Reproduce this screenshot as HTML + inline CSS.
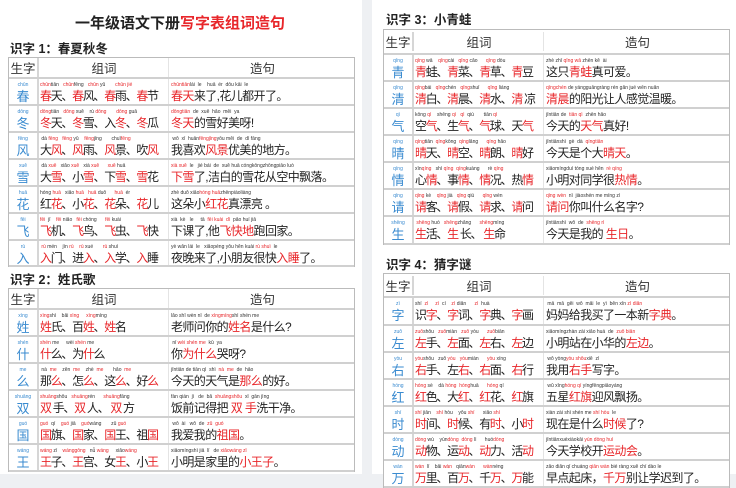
<!DOCTYPE html>
<html><head><meta charset="utf-8">
<style>
*{margin:0;padding:0;box-sizing:border-box}
body{width:736px;height:474px;overflow:hidden;background:#eef0f3;font-family:"Liberation Sans","Noto Sans CJK SC",sans-serif;color:#222;position:relative}
.page{position:absolute;top:0;background:#fff;height:474px}
.h1{position:absolute;font-size:15px;font-weight:bold;white-space:nowrap}
.h2{position:absolute;font-size:12.5px;font-weight:bold;white-space:nowrap}
.r{color:#e8262a}
.tbl{position:absolute;border:1px solid #bbb;border-bottom:none;background:#fff}
.row{display:flex;border-bottom:2px solid #d0d0d0}
.hd{font-size:12.5px;color:#333;align-items:center}
.c1{width:30px;flex:0 0 30px;border-right:2px solid #d6d6d6;text-align:center;overflow:hidden}
.c2{width:130px;flex:0 0 130px;border-right:1px solid #e4e4e4;padding-left:1px;overflow:hidden}
.c3{flex:1 1 auto;padding-left:2px;overflow:hidden}
.hd .c2,.hd .c3{text-align:center}
.py{font-size:5px;line-height:7px;height:7px;white-space:pre;color:#333;padding-top:3px;box-sizing:content-box}
.c1 .py{color:#3a8bd0}
.py .r{color:#e8262a}
.ch{font-size:13px;line-height:15px;color:#3a8bd0}
.tx{font-size:12px;line-height:15px;white-space:nowrap;letter-spacing:-0.6px}
.c2 .tx{letter-spacing:-1.3px}
</style></head><body>

<div class="page" style="left:0;width:362px"></div>
<div class="page" style="left:372px;width:364px"></div>

<div class="h1" style="left:75px;top:12px">一年级语文下册<span class="r">写字表组词造句</span></div>
<div class="h2" style="left:10px;top:38px">识字 1：春夏秋冬</div>

<div class="tbl" style="left:8px;top:57px;width:347px">
<div class="row hd" style="height:21px"><div class="c1">生字</div><div class="c2">组词</div><div class="c3">造句</div></div>
<div class="row" style="height:27px"><div class="c1"><div class="py">chūn</div><div class="ch">春</div></div><div class="c2"><div class="py"><span class="r">chūn</span>tiān   <span class="r">chūn</span>fēng   <span class="r">chūn</span> yǔ       <span class="r">chūn jié</span></div><div class="tx"><span class="r">春</span>天、<span class="r">春</span>风、<span class="r">春</span>雨、<span class="r">春</span>节</div></div><div class="c3"><div class="py"><span class="r">chūntiān</span>lái  le    huā  ér  dōu kāi  le</div><div class="tx"><span class="r">春天</span>来了,花儿都开了。</div></div></div>
<div class="row" style="height:27px"><div class="c1"><div class="py">dōng</div><div class="ch">冬</div></div><div class="c2"><div class="py"><span class="r">dōng</span>tiān   <span class="r">dōng</span> xuě    rù <span class="r">dōng</span>       <span class="r">dōng</span> guā</div><div class="tx"><span class="r">冬</span>天、<span class="r">冬</span>雪、入<span class="r">冬</span>、<span class="r">冬</span>瓜</div></div><div class="c3"><div class="py"><span class="r">dōngtiān</span>  de  xuě  hǎo  měi  ya</div><div class="tx"><span class="r">冬天</span>的雪好美呀!</div></div></div>
<div class="row" style="height:27px"><div class="c1"><div class="py">fēng</div><div class="ch">风</div></div><div class="c2"><div class="py"> dà <span class="r">fēng</span>   <span class="r">fēng</span> yǔ    <span class="r">fēng</span>jǐng       chuī<span class="r">fēng</span></div><div class="tx">大<span class="r">风</span>、<span class="r">风</span>雨、<span class="r">风</span>景、吹<span class="r">风</span></div></div><div class="c3"><div class="py"> wǒ  xǐ  huān<span class="r">fēngjǐng</span>yōu měi  de  dì fāng</div><div class="tx">我喜欢<span class="r">风景</span>优美的地方。</div></div></div>
<div class="row" style="height:27px"><div class="c1"><div class="py">xuě</div><div class="ch">雪</div></div><div class="c2"><div class="py"> dà <span class="r">xuě</span>   xiǎo <span class="r">xuě</span>   xià <span class="r">xuě</span>      <span class="r">xuě</span> huā</div><div class="tx">大<span class="r">雪</span>、小<span class="r">雪</span>、下<span class="r">雪</span>、<span class="r">雪</span>花</div></div><div class="c3"><div class="py"><span class="r">xià xuě</span>  le   jié bái  de  xuě huā cóngkōngzhōngpiāo luò</div><div class="tx"><span class="r">下雪</span>了,洁白的雪花从空中飘落。</div></div></div>
<div class="row" style="height:27px"><div class="c1"><div class="py">huā</div><div class="ch">花</div></div><div class="c2"><div class="py">hóng <span class="r">huā</span>   xiǎo <span class="r">huā</span>   <span class="r">huā</span> duǒ      <span class="r">huā</span>  ér</div><div class="tx">红<span class="r">花</span>、小<span class="r">花</span>、<span class="r">花</span>朵、<span class="r">花</span>儿</div></div><div class="c3"><div class="py">zhè duǒ xiǎo<span class="r">hóng huā</span>zhēnpiàoliàng</div><div class="tx">这朵小<span class="r">红花</span>真漂亮 。</div></div></div>
<div class="row" style="height:27px"><div class="c1"><div class="py">fēi</div><div class="ch">飞</div></div><div class="c2"><div class="py"><span class="r">fēi</span>  jī    <span class="r">fēi</span> niǎo   <span class="r">fēi</span> chóng      <span class="r">fēi</span> kuài</div><div class="tx"><span class="r">飞</span>机、<span class="r">飞</span>鸟、<span class="r">飞</span>虫、<span class="r">飞</span>快</div></div><div class="c3"><div class="py">xià  kè   le     tā  <span class="r">fēi kuài  dì</span>  pǎo huí jiā</div><div class="tx">下课了,他<span class="r">飞快地</span>跑回家。</div></div></div>
<div class="row" style="height:26px"><div class="c1"><div class="py">rù</div><div class="ch">入</div></div><div class="c2"><div class="py"> <span class="r">rù</span> mén    jìn <span class="r">rù</span>    <span class="r">rù</span> xué       <span class="r">rù</span> shuì</div><div class="tx"><span class="r">入</span>门、进<span class="r">入</span>、<span class="r">入</span>学、<span class="r">入</span>睡</div></div><div class="c3"><div class="py">yè wǎn lái  le   xiǎopéng yǒu hěn kuài <span class="r">rù shuì</span>  le</div><div class="tx">夜晚来了,小朋友很快<span class="r">入睡</span>了。</div></div></div>
</div>

<div class="h2" style="left:10px;top:269px">识字 2：姓氏歌</div>
<div class="tbl" style="left:8px;top:288px;width:347px">
<div class="row hd" style="height:21px"><div class="c1">生字</div><div class="c2">组词</div><div class="c3">造句</div></div>
<div class="row" style="height:27px"><div class="c1"><div class="py">xìng</div><div class="ch">姓</div></div><div class="c2"><div class="py"><span class="r">xìng</span>shì    bǎi <span class="r">xìng</span>     <span class="r">xìng</span>míng</div><div class="tx"><span class="r">姓</span>氏、百<span class="r">姓</span>、<span class="r">姓</span>名</div></div><div class="c3"><div class="py">lǎo shī wèn nǐ  de <span class="r">xìngmíng</span>shì shén me</div><div class="tx">老师问你的<span class="r">姓名</span>是什么?</div></div></div>
<div class="row" style="height:27px"><div class="c1"><div class="py">shén</div><div class="ch">什</div></div><div class="c2"><div class="py"><span class="r">shén</span> me     wèi <span class="r">shén</span> me</div><div class="tx"><span class="r">什</span>么、为<span class="r">什</span>么</div></div><div class="c3"><div class="py"> nǐ <span class="r">wèi shén me</span>  kū  ya</div><div class="tx">你<span class="r">为什么</span>哭呀?</div></div></div>
<div class="row" style="height:27px"><div class="c1"><div class="py">me</div><div class="ch">么</div></div><div class="c2"><div class="py"> nà  <span class="r">me</span>    zěn  <span class="r">me</span>    zhè  <span class="r">me</span>       hǎo  <span class="r">me</span></div><div class="tx">那<span class="r">么</span>、怎<span class="r">么</span>、这<span class="r">么</span>、好<span class="r">么</span></div></div><div class="c3"><div class="py">jīntiān de tiān qì  shì  <span class="r">nà  me</span>  de  hǎo</div><div class="tx">今天的天气是<span class="r">那么</span>的好。</div></div></div>
<div class="row" style="height:27px"><div class="c1"><div class="py">shuāng</div><div class="ch">双</div></div><div class="c2"><div class="py"><span class="r">shuāng</span>shǒu   <span class="r">shuāng</span>rén      <span class="r">shuāng</span>fāng</div><div class="tx"> <span class="r">双</span> 手、<span class="r">双</span> 人、 <span class="r">双</span> 方</div></div><div class="c3"><div class="py">fàn qián  jì   de  bǎ  <span class="r">shuāngshǒu</span>  xǐ  gān jìng</div><div class="tx">饭前记得把 <span class="r">双 手</span>洗干净。</div></div></div>
<div class="row" style="height:27px"><div class="c1"><div class="py">guó</div><div class="ch">国</div></div><div class="c2"><div class="py"><span class="r">guó</span>  qí    <span class="r">guó</span> jiā    <span class="r">guó</span>wáng       zǔ <span class="r">guó</span></div><div class="tx"><span class="r">国</span>旗、<span class="r">国</span>家、<span class="r">国</span>王、祖<span class="r">国</span></div></div><div class="c3"><div class="py"> wǒ  ài   wǒ  de  <span class="r">zǔ  guó</span></div><div class="tx">我爱我的<span class="r">祖国</span>。</div></div></div>
<div class="row" style="height:27px"><div class="c1"><div class="py">wáng</div><div class="ch">王</div></div><div class="c2"><div class="py"><span class="r">wáng</span> zǐ    <span class="r">wánggōng</span>   nǚ <span class="r">wáng</span>     xiǎo<span class="r">wáng</span></div><div class="tx"><span class="r">王</span>子、<span class="r">王</span>宫、女<span class="r">王</span>、小<span class="r">王</span></div></div><div class="c3"><div class="py">xiǎomíngshì jiā  lǐ   de <span class="r">xiǎowáng zǐ</span></div><div class="tx">小明是家里的<span class="r">小王子</span>。</div></div></div>
</div>

<div class="h2" style="left:386px;top:9px">识字 3：小青蛙</div>
<div class="tbl" style="left:383px;top:29px;width:347px">
<div class="row hd" style="height:25px"><div class="c1">生字</div><div class="c2">组词</div><div class="c3">造句</div></div>
<div class="row" style="height:27px"><div class="c1"><div class="py">qīng</div><div class="ch">青</div></div><div class="c2"><div class="py"><span class="r">qīng</span> wā    <span class="r">qīng</span>cài   <span class="r">qīng</span> cǎo      <span class="r">qīng</span> dòu</div><div class="tx"><span class="r">青</span>蛙、<span class="r">青</span>菜、<span class="r">青</span>草、<span class="r">青</span>豆</div></div><div class="c3"><div class="py">zhè zhī <span class="r">qīng wā</span> zhēn kě  ài</div><div class="tx">这只<span class="r">青蛙</span>真可爱。</div></div></div>
<div class="row" style="height:27px"><div class="c1"><div class="py">qīng</div><div class="ch">清</div></div><div class="c2"><div class="py"><span class="r">qīng</span>bái   <span class="r">qīng</span>chén   <span class="r">qīng</span>shuǐ      <span class="r">qīng</span> liáng</div><div class="tx"><span class="r">清</span>白、<span class="r">清</span>晨、<span class="r">清</span>水、<span class="r">清</span> 凉</div></div><div class="c3"><div class="py"><span class="r">qīngchén</span> de yángguāngràng rén gǎn jué wēn nuǎn</div><div class="tx"><span class="r">清晨</span>的阳光让人感觉温暖。</div></div></div>
<div class="row" style="height:27px"><div class="c1"><div class="py">qì</div><div class="ch">气</div></div><div class="c2"><div class="py">kōng <span class="r">qì</span>    shēng <span class="r">qì</span>   <span class="r">qì</span>  qiú       tiān <span class="r">qì</span></div><div class="tx">空<span class="r">气</span>、生<span class="r">气</span>、<span class="r">气</span>球、天<span class="r">气</span></div></div><div class="c3"><div class="py">jīntiān de  <span class="r">tiān qì</span>  zhēn hǎo</div><div class="tx">今天的<span class="r">天气</span>真好!</div></div></div>
<div class="row" style="height:27px"><div class="c1"><div class="py">qíng</div><div class="ch">晴</div></div><div class="c2"><div class="py"><span class="r">qíng</span>tiān  <span class="r">qíng</span>kōng  <span class="r">qíng</span>lǎng      <span class="r">qíng</span> hǎo</div><div class="tx"><span class="r">晴</span>天、<span class="r">晴</span>空、<span class="r">晴</span>朗、<span class="r">晴</span>好</div></div><div class="c3"><div class="py">jīntiānshì  gè  dà  <span class="r">qíngtiān</span></div><div class="tx">今天是个大<span class="r">晴天</span>。</div></div></div>
<div class="row" style="height:27px"><div class="c1"><div class="py">qíng</div><div class="ch">情</div></div><div class="c2"><div class="py">xīn<span class="r">qíng</span>   shì <span class="r">qíng</span>  <span class="r">qíng</span>kuàng      rè <span class="r">qíng</span></div><div class="tx">心<span class="r">情</span>、事<span class="r">情</span>、<span class="r">情</span>况、热<span class="r">情</span></div></div><div class="c3"><div class="py">xiǎomíngduì tóng xué hěn  <span class="r">rè qíng</span></div><div class="tx">小明对同学很<span class="r">热情</span>。</div></div></div>
<div class="row" style="height:27px"><div class="c1"><div class="py">qǐng</div><div class="ch">请</div></div><div class="c2"><div class="py"><span class="r">qǐng</span> kè    <span class="r">qǐng</span> jià   <span class="r">qǐng</span> qiú      <span class="r">qǐng</span> wèn</div><div class="tx"><span class="r">请</span>客、<span class="r">请</span>假、<span class="r">请</span>求、<span class="r">请</span>问</div></div><div class="c3"><div class="py"><span class="r">qǐng wèn</span>  nǐ  jiàoshén me míng zì</div><div class="tx"><span class="r">请问</span>你叫什么名字?</div></div></div>
<div class="row" style="height:28px"><div class="c1"><div class="py">shēng</div><div class="ch">生</div></div><div class="c2"><div class="py"> <span class="r">shēng</span> huó   <span class="r">shēng</span>zhǎng      <span class="r">shēng</span>mìng</div><div class="tx"> <span class="r">生</span>活、<span class="r">生</span> 长、 <span class="r">生</span>命</div></div><div class="c3"><div class="py">jīntiānshì  wǒ  de  <span class="r">shēng rì</span></div><div class="tx">今天是我的 <span class="r">生日</span>。</div></div></div>
</div>

<div class="h2" style="left:386px;top:254px">识字 4：猜字谜</div>
<div class="tbl" style="left:383px;top:273px;width:347px">
<div class="row hd" style="height:24px"><div class="c1">生字</div><div class="c2">组词</div><div class="c3">造句</div></div>
<div class="row" style="height:28px"><div class="c1"><div class="py">zì</div><div class="ch">字</div></div><div class="c2"><div class="py">shí  <span class="r">zì</span>     <span class="r">zì</span>  cí    <span class="r">zì</span> diǎn      <span class="r">zì</span>  huà</div><div class="tx">识<span class="r">字</span>、<span class="r">字</span>词、<span class="r">字</span>典、<span class="r">字</span>画</div></div><div class="c3"><div class="py"> mā  mā  gěi  wǒ  mǎi  le  yì  běn xīn <span class="r">zì diǎn</span></div><div class="tx">妈妈给我买了一本新<span class="r">字典</span>。</div></div></div>
<div class="row" style="height:27px"><div class="c1"><div class="py">zuǒ</div><div class="ch">左</div></div><div class="c2"><div class="py"><span class="r">zuǒ</span>shǒu   <span class="r">zuǒ</span>miàn   <span class="r">zuǒ</span> yòu      <span class="r">zuǒ</span>biān</div><div class="tx"><span class="r">左</span>手、<span class="r">左</span>面、<span class="r">左</span>右、<span class="r">左</span>边</div></div><div class="c3"><div class="py">xiǎomíngzhàn zài xiǎo huá  de  <span class="r">zuǒ biān</span></div><div class="tx">小明站在小华的<span class="r">左边</span>。</div></div></div>
<div class="row" style="height:27px"><div class="c1"><div class="py">yòu</div><div class="ch">右</div></div><div class="c2"><div class="py"><span class="r">yòu</span>shǒu   zuǒ <span class="r">yòu</span>   <span class="r">yòu</span>miàn      <span class="r">yòu</span> xíng</div><div class="tx"><span class="r">右</span>手、左<span class="r">右</span>、<span class="r">右</span>面、<span class="r">右</span>行</div></div><div class="c3"><div class="py"> wǒ yòng<span class="r">yòu shǒu</span>xiě  zì</div><div class="tx">我用<span class="r">右手</span>写字。</div></div></div>
<div class="row" style="height:27px"><div class="c1"><div class="py">hóng</div><div class="ch">红</div></div><div class="c2"><div class="py"><span class="r">hóng</span> sè    dà <span class="r">hóng</span>  <span class="r">hóng</span>huā      <span class="r">hóng</span> qí</div><div class="tx"><span class="r">红</span>色、大<span class="r">红</span>、<span class="r">红</span>花、<span class="r">红</span>旗</div></div><div class="c3"><div class="py"> wǔ xīng<span class="r">hóng qí</span> yíngfēngpiāoyáng</div><div class="tx">五星<span class="r">红旗</span>迎风飘扬。</div></div></div>
<div class="row" style="height:27px"><div class="c1"><div class="py">shí</div><div class="ch">时</div></div><div class="c2"><div class="py"><span class="r">shí</span> jiān    <span class="r">shí</span> hòu    yǒu <span class="r">shí</span>      xiǎo <span class="r">shí</span></div><div class="tx"><span class="r">时</span>间、<span class="r">时</span>候、有<span class="r">时</span>、小<span class="r">时</span></div></div><div class="c3"><div class="py">xiàn zài shì shén me <span class="r">shí hòu</span>  le</div><div class="tx">现在是什么<span class="r">时候</span>了?</div></div></div>
<div class="row" style="height:27px"><div class="c1"><div class="py">dòng</div><div class="ch">动</div></div><div class="c2"><div class="py"><span class="r">dòng</span> wù    yùn<span class="r">dòng</span>  <span class="r">dòng</span> lì      huó<span class="r">dòng</span></div><div class="tx"><span class="r">动</span>物、运<span class="r">动</span>、<span class="r">动</span>力、活<span class="r">动</span></div></div><div class="c3"><div class="py">jīntiānxuéxiàokāi <span class="r">yùn dòng huì</span></div><div class="tx">今天学校开<span class="r">运动会</span>。</div></div></div>
<div class="row" style="height:27px"><div class="c1"><div class="py">wàn</div><div class="ch">万</div></div><div class="c2"><div class="py"><span class="r">wàn</span>  lǐ    bǎi <span class="r">wàn</span>   qiān<span class="r">wàn</span>      <span class="r">wàn</span>néng</div><div class="tx"><span class="r">万</span>里、百<span class="r">万</span>、千<span class="r">万</span>、<span class="r">万</span>能</div></div><div class="c3"><div class="py">zǎo diǎn qǐ chuáng <span class="r">qiān wàn</span> bié ràng xuě chí dào le</div><div class="tx">早点起床，<span class="r">千万</span>别让学迟到了。</div></div></div>
</div>

</body></html>
